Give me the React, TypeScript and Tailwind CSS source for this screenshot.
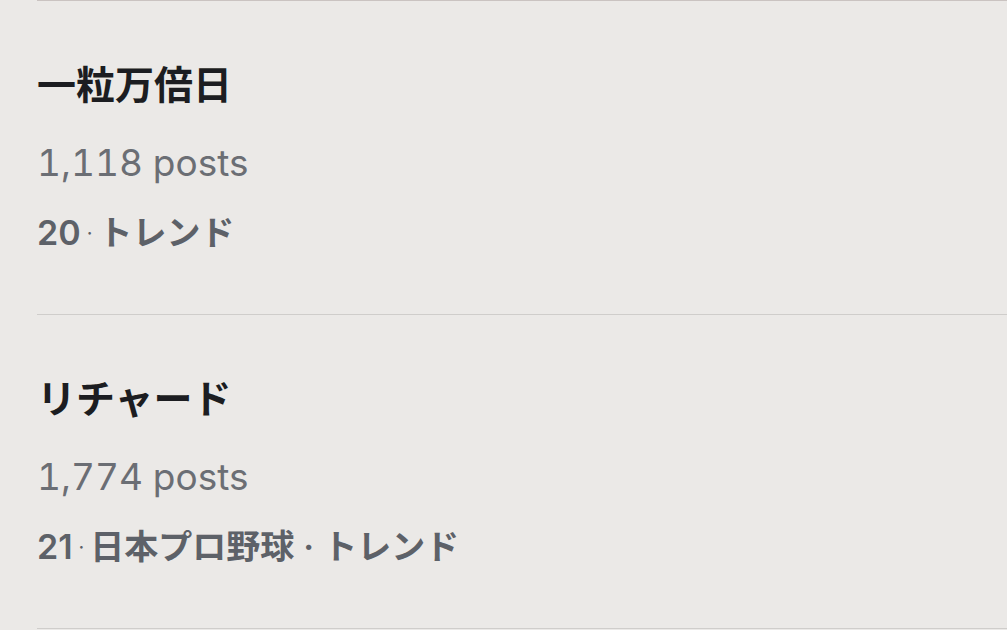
const trends = [
  { title: "一粒万倍日", posts: "1,118 posts", rank: "20", meta: ["トレンド"] },
  { title: "リチャード", posts: "1,774 posts", rank: "21", meta: ["日本プロ野球", "トレンド"] },
];

const font = { fontFamily: '"Inter", "Noto Sans CJK JP", sans-serif' };

function TrendRow({ title, posts, rank, meta }: { title: string; posts: string; rank: string; meta: string[] }) {
  return (
    <div className="ml-[37px] h-[314px] border-b border-[#cfcdcb] pt-[58px]">
      <div className="text-[39px] font-bold leading-[52px] text-[#1c1d21]">{title}</div>
      <div className="mt-[28px] text-[37px] leading-[48px] text-[#6b6e74] tabular-nums">{posts}</div>
      <div className="mt-[26px] flex items-center text-[34px] font-semibold leading-[40px] text-[#5d6168]">
        <span>{rank}</span>
        <span className="mx-[6px] text-[20px] font-normal">·</span>
        {meta.map((m, i) => (
          <span key={m} className="flex items-center">
            {i > 0 && <span className="mx-[9px]">·</span>}
            {m}
          </span>
        ))}
      </div>
    </div>
  );
}

export default function App() {
  return (
    <div className="h-[630px] w-[1007px] overflow-hidden bg-[#ebe9e7]" style={font}>
      <div className="ml-[37px] border-t border-[#cac3c1]" />
      {trends.map((t) => (
        <TrendRow key={t.rank} {...t} />
      ))}
    </div>
  );
}
